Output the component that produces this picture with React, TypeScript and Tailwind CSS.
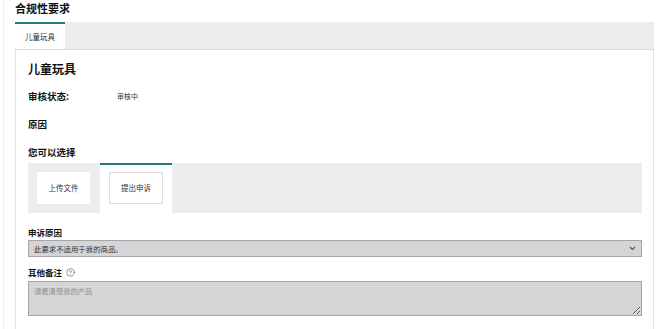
import { CircleHelp } from 'lucide-react';

const font = { fontFamily: '"Noto Sans CJK SC", "Noto Sans", sans-serif' };

export default function App() {
  return (
    <div className="w-[660px] h-[329px] overflow-hidden bg-white text-[#0f1111]" style={font}>
      <div className="ml-[3px] h-full border-l border-[#ececec]">
        {/* Page title */}
        <div className="h-[22px] pl-[11px] text-[11px] font-bold leading-[16px]">合规性要求</div>

        {/* Tab strip */}
        <div className="ml-[11px] mr-[6px] flex h-[28px] bg-[#ebeced] border-b border-[#dcdcdc]">
          <div className="w-[50px] bg-white border-t-2 border-[#23777d] flex items-center justify-center text-[7.5px] text-[#333]">
            儿童玩具
          </div>
        </div>

        {/* Panel */}
        <div className="ml-[11px] mr-[6px] h-[300px] border-l border-r border-[#e3e3e3] bg-white pl-[12px] pr-[11px] pt-[11px]">
          <div className="text-[12px] font-bold leading-[16px]">儿童玩具</div>

          <div className="mt-[12px] flex items-center leading-[14px]">
            <span className="w-[89px] text-[9.5px] font-bold">审核状态:</span>
            <span className="text-[7px] text-[#333]">审核中</span>
          </div>

          <div className="mt-[14px] text-[9.5px] font-bold leading-[14px]">原因</div>
          <div className="mt-[14px] text-[9.5px] font-bold leading-[14px]">您可以选择</div>

          {/* Option tabs */}
          <div className="mt-[4px] flex h-[50px] bg-[#ebeced]">
            <div className="w-[72px] pl-[9px] pt-[9px]">
              <div className="flex h-[32px] w-[53px] items-center justify-center bg-white text-[7.5px] text-[#333]">
                上传文件
              </div>
            </div>
            <div className="w-[72px] border-t-2 border-[#23777d] bg-white pl-[9px] pt-[7px]">
              <div className="flex h-[32px] w-[54px] items-center justify-center border border-[#dedede] bg-white text-[7.5px] text-[#333]">
                提出申诉
              </div>
            </div>
          </div>

          <div className="mt-[12px] text-[8.5px] font-bold leading-[14px]">申诉原因</div>
          <div className="mt-[1px] flex h-[17px] items-center justify-between border border-[#a6a6a6] bg-[#d4d5d7] pl-[5px] pr-[5px]">
            <span className="text-[7.4px] text-[#333]">此要求不适用于我的商品。</span>
            <svg width="7" height="5" viewBox="0 0 7 5" fill="none">
              <path d="M1 1l2.5 2.5L6 1" stroke="#555" strokeWidth="1.1" />
            </svg>
          </div>

          <div className="mt-[8px] flex items-center gap-[4px] leading-[14px]">
            <span className="text-[8.5px] font-bold">其他备注</span>
            <CircleHelp size={9} strokeWidth={1.6} className="text-[#555]" />
          </div>
          <textarea
            className="mt-[2px] block h-[35px] w-full border border-[#a6a6a6] bg-[#d4d5d7] px-[5px] py-[3px] text-[7.3px] leading-[12px] placeholder:text-[#8f9092] outline-none"
            style={{ ...font, fontSize: '7.3px' }}
            placeholder="请看清楚我的产品"
          />
        </div>
      </div>
    </div>
  );
}
